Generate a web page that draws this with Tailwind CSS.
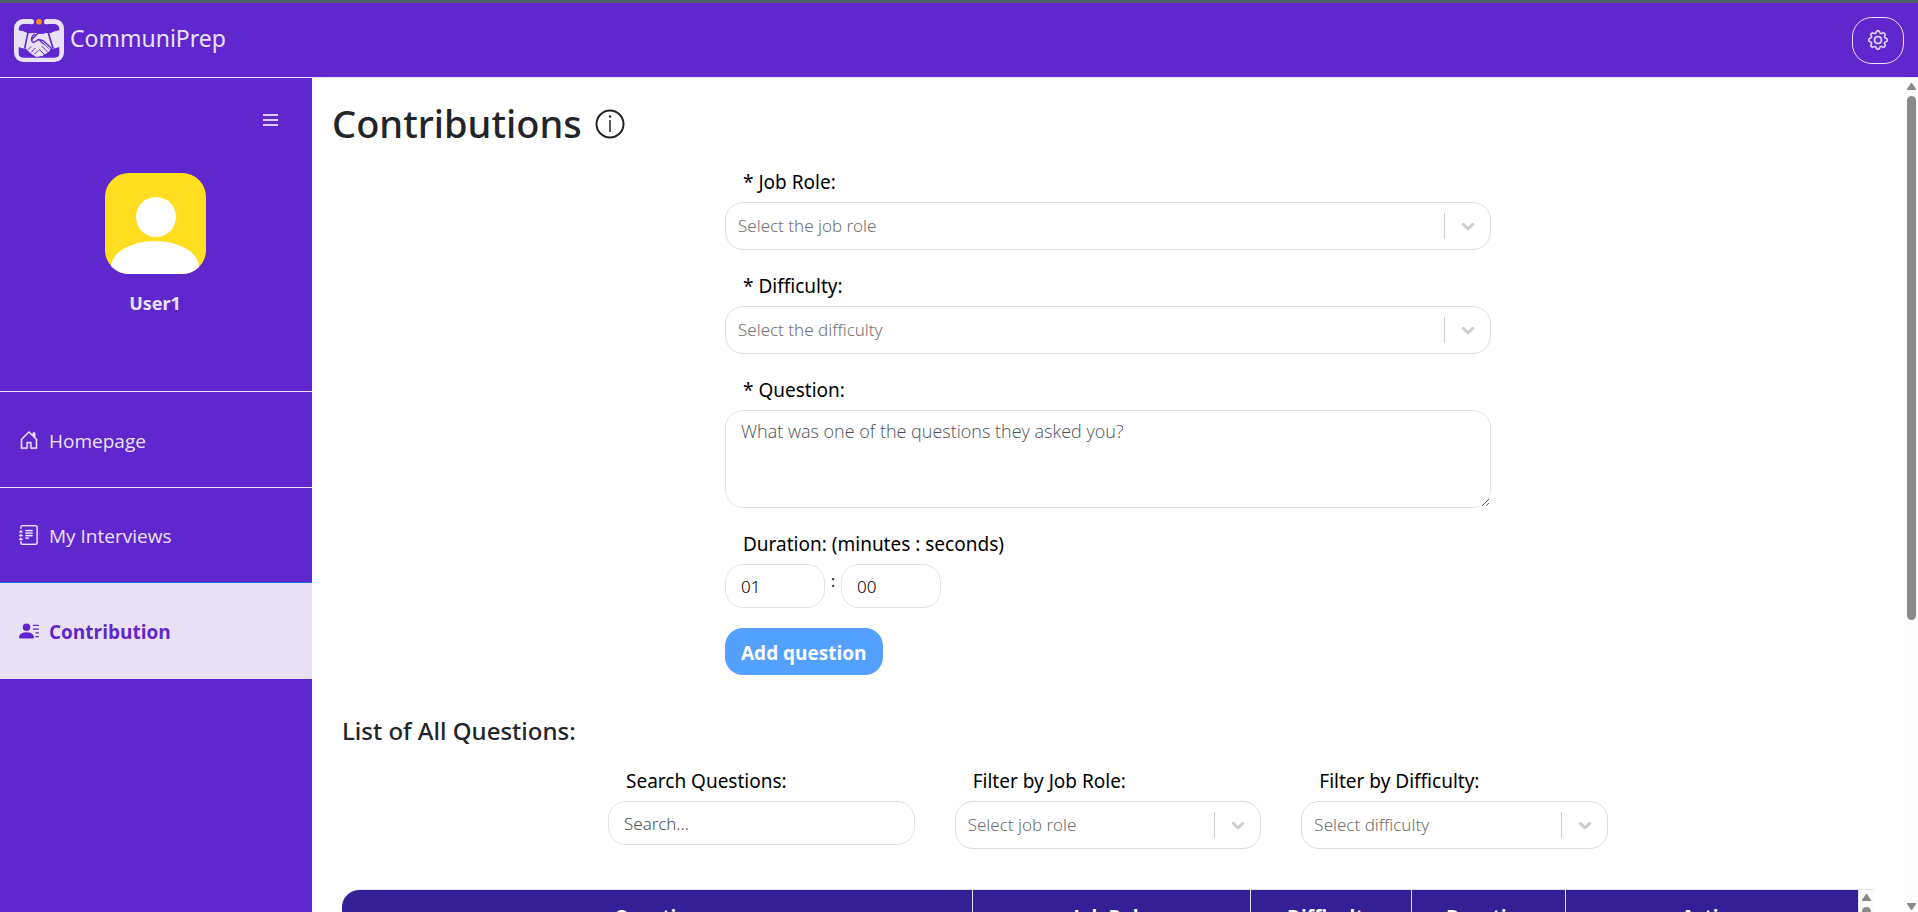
<!DOCTYPE html>
<html lang="en">
<head>
<meta charset="utf-8">
<meta name="viewport" content="width=device-width, initial-scale=1">
<title>CommuniPrep</title>
<script src="https://cdn.jsdelivr.net/npm/@tailwindcss/browser@4"></script>
</head>
<body class="flex h-screen flex-col overflow-hidden bg-white font-['Noto_Sans','Open_Sans',sans-serif] text-[17px] text-[#212529]">
<svg class="hidden" aria-hidden="true">
  <symbol id="chevron" viewBox="0 0 20 20"><path fill="currentColor" stroke="currentColor" stroke-width=".8" d="M4.516 7.548c0.436-0.446 1.043-0.481 1.576 0l3.908 3.747 3.908-3.747c0.533-0.481 1.141-0.446 1.574 0 0.436 0.445 0.408 1.197 0 1.615-0.406 0.418-4.695 4.502-4.695 4.502-0.217 0.223-0.502 0.335-0.787 0.335s-0.570-0.112-0.789-0.335c0 0-4.287-4.084-4.695-4.502s-0.436-1.170 0-1.615z"/></symbol>
</svg>

<header class="flex h-[78px] shrink-0 items-center justify-between border-t-[3px] border-b border-t-[#4a5f66] border-b-[#e9e2f7] bg-[#5f27cd] pr-[14px] pl-[14px] text-[#e9e2f7]">
  <a href="#" class="flex items-center gap-[6px]">
    <svg class="h-[43px] w-[50px]" viewBox="0 0 150 129" aria-hidden="true">
      <rect width="150" height="129" rx="28" fill="#e9e2f7"/>
      <path fill="#5f27cd" d="M52 0h46v15H52z"/>
      <path fill="#5f27cd" d="M14 34C14 20 20 15 32 15H56Q62 12 64 0H86Q88 12 94 15H118C130 15 136 20 136 34Q122 36 108 43L96 42Q82 48 66 42L42 43Q28 36 14 34Z"/>
      <circle cx="52" cy="8" r="8" fill="#e9e2f7"/><circle cx="98" cy="8" r="8" fill="#e9e2f7"/>
      <circle cx="75" cy="8" r="8.500" fill="#ff8c1a"/>
      <path fill="#5f27cd" d="M14 84Q24 89 36 89L45 98 54 106 67 114 79 112 92 106 104 98 110 89Q124 89 136 84V103Q136 116 122 116H28Q14 116 14 103Z"/>
      <path fill="none" stroke="#5f27cd" stroke-width="5" d="M42 40L32 88M103 42L117 88"/>
      <path fill="none" stroke="#5f27cd" stroke-width="4" stroke-linejoin="round" stroke-linecap="round" d="M72 43L54 61Q51 72 62 69L74 61L104 91M62 46Q50 52 53 65M74 61L88 65L112 88"/>
      <path fill="none" stroke="#e9e2f7" stroke-width="7" stroke-linecap="round" d="M49 97L59 87M57 103L68 92M67 108L77 98M84 108L73 98M95 101L80 88M104 94L88 80"/>
      <path fill="none" stroke="#5f27cd" stroke-width="3" stroke-linecap="round" d="M43 91L51 83M53 99L63 88M62 105L72 95M91 106L76 92M100 98L84 82"/>
    </svg>
    <span class="pb-1 text-[23px]">CommuniPrep</span>
  </a>
  <button type="button" aria-label="Settings" class="flex h-[47px] w-[52px] items-center justify-center rounded-[20px] border border-[#e9e2f7]">
    <svg class="size-5" viewBox="0 0 16 16" fill="currentColor" stroke="currentColor" stroke-width=".3" aria-hidden="true"><path d="M8 4.754a3.246 3.246 0 1 0 0 6.492 3.246 3.246 0 0 0 0-6.492M5.754 8a2.246 2.246 0 1 1 4.492 0 2.246 2.246 0 0 1-4.492 0"/><path d="M9.796 1.343c-.527-1.79-3.065-1.79-3.592 0l-.094.319a.873.873 0 0 1-1.255.52l-.292-.16c-1.64-.892-3.433.902-2.54 2.541l.159.292a.873.873 0 0 1-.52 1.255l-.319.094c-1.79.527-1.79 3.065 0 3.592l.319.094a.873.873 0 0 1 .52 1.255l-.16.292c-.892 1.64.901 3.434 2.541 2.54l.292-.159a.873.873 0 0 1 1.255.52l.094.319c.527 1.79 3.065 1.79 3.592 0l.094-.319a.873.873 0 0 1 1.255-.52l.292.16c1.64.893 3.434-.902 2.54-2.541l-.159-.292a.873.873 0 0 1 .52-1.255l.319-.094c1.79-.527 1.79-3.065 0-3.592l-.319-.094a.873.873 0 0 1-.52-1.255l.16-.292c.893-1.64-.902-3.433-2.541-2.54l-.292.159a.873.873 0 0 1-1.255-.52zm-2.633.283c.246-.835 1.428-.835 1.674 0l.094.319a1.873 1.873 0 0 0 2.693 1.115l.291-.16c.764-.415 1.6.42 1.184 1.185l-.159.292a1.873 1.873 0 0 0 1.116 2.692l.318.094c.835.246.835 1.428 0 1.674l-.319.094a1.873 1.873 0 0 0-1.115 2.693l.16.291c.415.764-.42 1.6-1.185 1.184l-.291-.159a1.873 1.873 0 0 0-2.693 1.116l-.094.318c-.246.835-1.428.835-1.674 0l-.094-.319a1.873 1.873 0 0 0-2.692-1.115l-.292.16c-.764.415-1.6-.42-1.184-1.185l.159-.291A1.873 1.873 0 0 0 1.945 8.93l-.319-.094c-.835-.246-.835-1.428 0-1.674l.319-.094A1.873 1.873 0 0 0 3.06 4.377l-.16-.292c-.415-.764.42-1.6 1.185-1.184l.292.159a1.873 1.873 0 0 0 2.692-1.115z"/></svg>
  </button>
</header>

<div class="flex min-h-0 flex-1">
  <aside class="flex w-[312px] shrink-0 flex-col bg-[#5f27cd] text-[#e9e2f7]">
    <div class="flex h-[313px] flex-col items-center pr-[2px]">
      <button type="button" aria-label="Toggle menu" class="mt-8 mr-[29px] flex size-5 items-center justify-center self-end">
        <svg class="size-5" viewBox="0 0 20 20" fill="none" stroke="currentColor" stroke-width="2" stroke-opacity=".9" aria-hidden="true"><path d="M2 5h15M2 10h15M2 15h15"/></svg>
      </button>
      <svg class="mt-[43px] size-[101px] shrink-0 rounded-3xl" viewBox="0 0 101 101" role="img" aria-label="User1 avatar"><rect width="101" height="101" fill="#ffdd1f"/><circle cx="51" cy="44" r="20" fill="#fff"/><ellipse cx="50" cy="94" rx="44" ry="26" fill="#fff"/></svg>
      <strong class="mt-[15px] text-lg leading-7">User1</strong>
    </div>
    <nav class="flex flex-col font-['Open_Sans'] text-[19px]">
      <a href="#" class="flex h-24 items-center gap-[10px] border-t border-[#e9e2f7] pl-[19px]">
        <svg class="size-5" viewBox="0 0 16 16" fill="currentColor" stroke="currentColor" stroke-width=".3" aria-hidden="true"><path d="M8.354 1.146a.5.5 0 0 0-.708 0l-6 6A.5.5 0 0 0 1.500 7.500v7a.5.5 0 0 0 .5.5h4.500a.5.5 0 0 0 .5-.5v-4h2v4a.5.5 0 0 0 .5.5H14a.5.5 0 0 0 .5-.5v-7a.5.5 0 0 0-.146-.354L13 5.793V2.500a.5.5 0 0 0-.5-.5h-1a.5.5 0 0 0-.5.5v1.293zM2.500 14V7.707l5.500-5.500 5.500 5.500V14H10v-4a.5.5 0 0 0-.5-.5h-3a.5.5 0 0 0-.5.5v4z"/></svg>
        <span class="pt-[3px]">Homepage</span>
      </a>
      <a href="#" class="flex h-[95px] items-center gap-[10px] border-t border-[#e9e2f7] pl-[19px]">
        <svg class="size-5" viewBox="0 0 16 16" fill="currentColor" stroke="currentColor" stroke-width=".2" aria-hidden="true"><path d="M5 10.500a.5.5 0 0 1 .5-.5h2a.5.5 0 0 1 0 1h-2a.5.5 0 0 1-.5-.5m0-2a.5.5 0 0 1 .5-.5h5a.5.5 0 0 1 0 1h-5a.5.5 0 0 1-.5-.5m0-2a.5.5 0 0 1 .5-.5h5a.5.5 0 0 1 0 1h-5a.5.5 0 0 1-.5-.5m0-2a.5.5 0 0 1 .5-.5h5a.5.5 0 0 1 0 1h-5a.5.5 0 0 1-.5-.5"/><path d="M3 0h10a2 2 0 0 1 2 2v12a2 2 0 0 1-2 2H3a2 2 0 0 1-2-2v-1h1v1a1 1 0 0 0 1 1h10a1 1 0 0 0 1-1V2a1 1 0 0 0-1-1H3a1 1 0 0 0-1 1v1H1V2a2 2 0 0 1 2-2"/><path d="M1 5v-.5a.5.5 0 0 1 1 0V5h.5a.5.5 0 0 1 0 1h-2a.5.5 0 0 1 0-1zm0 3v-.5a.5.5 0 0 1 1 0V8h.5a.5.5 0 0 1 0 1h-2a.5.5 0 0 1 0-1zm0 3v-.5a.5.5 0 0 1 1 0v.5h.5a.5.5 0 0 1 0 1h-2a.5.5 0 0 1 0-1z"/></svg>
        <span class="pt-[3px]">My Interviews</span>
      </a>
      <a href="#" aria-current="page" class="flex h-[97px] items-center gap-[10px] border-t border-[#0d6efd] bg-[#e9e2f7] pl-[19px] font-bold text-[#5f27cd]">
        <svg class="size-5" viewBox="0 0 16 16" fill="currentColor" aria-hidden="true"><path d="M6 8a3 3 0 1 0 0-6 3 3 0 0 0 0 6m-5 6s-1 0-1-1 1-4 6-4 6 3 6 4-1 1-1 1zM11 3.500a.5.5 0 0 1 .5-.5h4a.5.5 0 0 1 0 1h-4a.5.5 0 0 1-.5-.5m.5 2.500a.5.5 0 0 0 0 1h4a.5.5 0 0 0 0-1zm2 3a.5.5 0 0 0 0 1h2a.5.5 0 0 0 0-1zm0 3a.5.5 0 0 0 0 1h2a.5.5 0 0 0 0-1z"/></svg>
        <span class="pt-[3px]">Contribution</span>
      </a>
    </nav>
  </aside>

  <main class="min-w-0 flex-1 overflow-hidden px-5 pt-5">
    <div class="flex h-[52px] items-center gap-[13px]">
      <h1 class="pb-[2px] text-[38px] font-medium">Contributions</h1>
      <button type="button" aria-label="About contributions">
        <svg class="size-[30px]" viewBox="0 0 30 30" fill="none" stroke="currentColor" stroke-width="2" aria-hidden="true"><circle cx="15" cy="15" r="13.500"/><path stroke-width="1.500" d="M15 11v12"/><circle cx="15" cy="7.500" r="1.200" fill="currentColor" stroke="none"/></svg>
      </button>
    </div>

    <div class="px-[10px]">
      <form class="mx-auto mt-5 w-1/2">
        <label for="role" class="block h-8 pl-[18px] text-[19px] leading-6 text-black">* Job Role:</label>
        <div class="relative mb-6">
          <select id="role" class="h-12 w-full appearance-none rounded-[18px] border border-[#dcdcdc] bg-transparent pr-14 pl-3 font-light text-[#707070]"><option>Select the job role</option></select>
          <span class="pointer-events-none absolute inset-y-0 right-[13px] flex items-center gap-[13px] text-[#ccc]"><span class="h-[26px] w-px bg-[#ccc]"></span><svg class="size-5" aria-hidden="true"><use href="#chevron"/></svg></span>
        </div>
        <label for="difficulty" class="block h-8 pl-[18px] text-[19px] leading-6 text-black">* Difficulty:</label>
        <div class="relative mb-6">
          <select id="difficulty" class="h-12 w-full appearance-none rounded-[18px] border border-[#dcdcdc] bg-transparent pr-14 pl-3 font-light text-[#707070]"><option>Select the difficulty</option></select>
          <span class="pointer-events-none absolute inset-y-0 right-[13px] flex items-center gap-[13px] text-[#ccc]"><span class="h-[26px] w-px bg-[#ccc]"></span><svg class="size-5" aria-hidden="true"><use href="#chevron"/></svg></span>
        </div>
        <label for="question" class="block h-8 pl-[18px] text-[19px] leading-6 text-black">* Question:</label>
        <textarea id="question" placeholder="What was one of the questions they asked you?" class="block h-[98px] w-full rounded-[18px] border border-[#dee2e6] px-[15px] py-2 font-['Open_Sans'] text-lg leading-6 font-light placeholder:text-[#4c5055]"></textarea>
        <label for="minutes" class="mt-6 block h-8 pl-[18px] text-[19px] leading-6 text-black">Duration: (minutes : seconds)</label>
        <div class="flex">
          <input id="minutes" type="text" value="01" class="h-11 w-[100px] rounded-[18px] border border-[#dee2e6] px-[15px] font-light text-black">
          <span class="w-4 pt-1 text-center">:</span>
          <input type="text" aria-label="Seconds" value="00" class="h-11 w-[100px] rounded-[18px] border border-[#dee2e6] px-[15px] font-light text-black">
        </div>
        <button type="button" class="mt-5 h-[47px] rounded-[18px] bg-[#54a0ff] px-4 pt-[3px] font-['Open_Sans'] text-[19px] font-bold text-white">Add question</button>
      </form>

      <h2 class="mt-10 text-2xl leading-8 font-medium">List of All Questions:</h2>

      <div class="mx-auto mt-[22px] flex w-[1000px] max-w-full gap-10">
        <div class="flex-1">
          <label for="search" class="block h-8 pl-[18px] text-[19px] leading-6 text-black">Search Questions:</label>
          <input id="search" type="search" placeholder="Search..." class="h-11 w-full rounded-[18px] border border-[#dee2e6] px-[15px] font-light placeholder:text-[#4c5055]">
        </div>
        <div class="flex-1">
          <label for="filter-role" class="block h-8 pl-[18px] text-[19px] leading-6 text-black">Filter by Job Role:</label>
          <div class="relative">
            <select id="filter-role" class="h-12 w-full appearance-none rounded-[18px] border border-[#dcdcdc] bg-transparent pr-14 pl-3 font-light text-[#707070]"><option>Select job role</option></select>
            <span class="pointer-events-none absolute inset-y-0 right-[13px] flex items-center gap-[13px] text-[#ccc]"><span class="h-[26px] w-px bg-[#ccc]"></span><svg class="size-5" aria-hidden="true"><use href="#chevron"/></svg></span>
          </div>
        </div>
        <div class="flex-1">
          <label for="filter-difficulty" class="block h-8 pl-[18px] text-[19px] leading-6 text-black">Filter by Difficulty:</label>
          <div class="relative">
            <select id="filter-difficulty" class="h-12 w-full appearance-none rounded-[18px] border border-[#dcdcdc] bg-transparent pr-14 pl-3 font-light text-[#707070]"><option>Select difficulty</option></select>
            <span class="pointer-events-none absolute inset-y-0 right-[13px] flex items-center gap-[13px] text-[#ccc]"><span class="h-[26px] w-px bg-[#ccc]"></span><svg class="size-5" aria-hidden="true"><use href="#chevron"/></svg></span>
          </div>
        </div>
      </div>

      <div class="mt-10 flex overflow-hidden rounded-tl-[18px] border-t border-[#dee2e6]">
        <table class="min-w-0 flex-1 table-fixed border-collapse font-['Open_Sans'] text-[19px]">
          <colgroup><col class="w-[41.6%]"><col class="w-[18.3%]"><col class="w-[10.6%]"><col class="w-[10.2%]"><col></colgroup>
          <thead>
            <tr class="h-[54px] bg-[#341f97] text-white">
              <th class="border-r border-[#dee2e6]">Question</th>
              <th class="border-r border-[#dee2e6]">Job Role</th>
              <th class="border-r border-[#dee2e6]">Difficulty</th>
              <th class="border-r border-[#dee2e6]">Duration</th>
              <th class="border-r border-[#dee2e6]">Action</th>
            </tr>
          </thead>
        </table>
        <div class="flex w-[15px] flex-col items-center gap-[6px] bg-[#fafafa] pt-1" aria-hidden="true">
          <svg class="h-[7px] w-[9px]" viewBox="0 0 9 7"><path fill="#8a8a8a" d="M4 0h1l4 6v1H0V6z"/></svg>
          <span class="w-[9px] flex-1 rounded-t-full bg-[#8a8a8a]"></span>
        </div>
      </div>
    </div>
  </main>

  <div class="flex w-[14px] shrink-0 flex-col items-center bg-[#fcfcfc] pt-[5px] pb-[2px]" aria-hidden="true">
    <svg class="h-[7px] w-[9px] shrink-0" viewBox="0 0 9 7"><path fill="#8a8a8a" d="M4 0h1l4 6v1H0V6z"/></svg>
    <div class="my-[6px] flex w-[9px] flex-1 flex-col"><span class="h-[65.4%] rounded-full bg-[#8a8a8a]"></span></div>
    <svg class="h-[7px] w-[9px] shrink-0" viewBox="0 0 9 7"><path fill="#8a8a8a" d="M4 7h1l4-6V0H0v1z"/></svg>
  </div>
</div>
</body>
</html>
